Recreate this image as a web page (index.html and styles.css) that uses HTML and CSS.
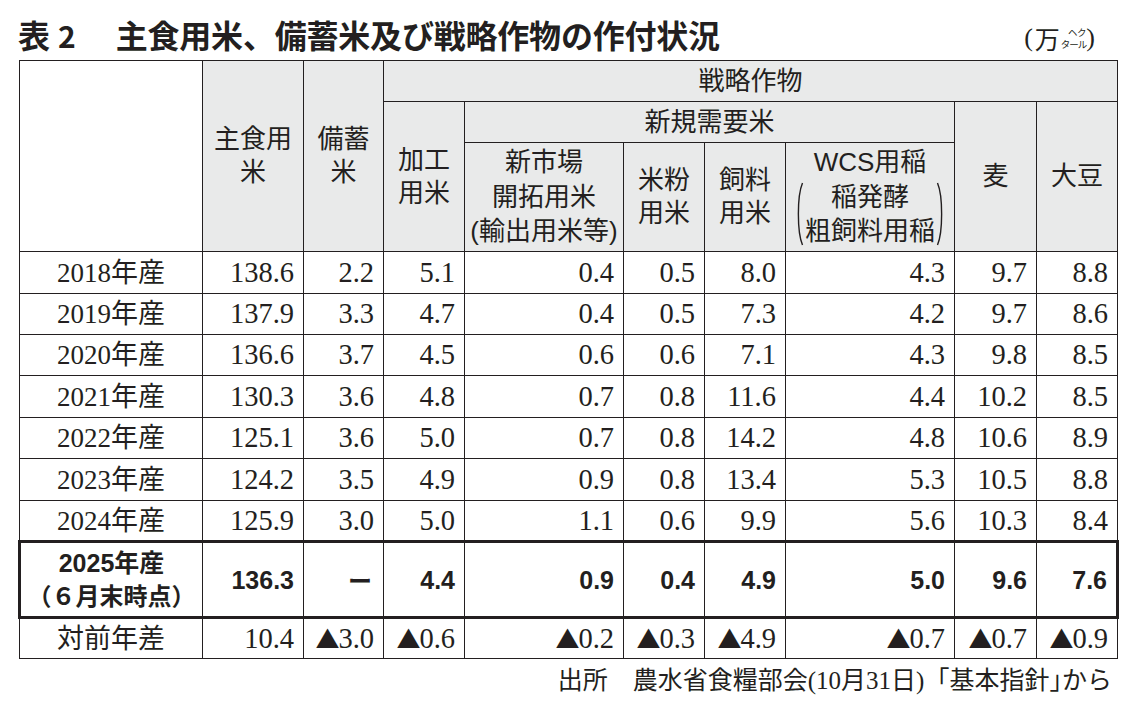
FILE: index.html
```html
<!DOCTYPE html>
<html lang="ja">
<head>
<meta charset="utf-8">
<title>表2</title>
<link rel="stylesheet" href="styles.css">
</head>
<body>
<div class="page">
  <div class="titlebar">
    <h1 class="title"><span class="t-hyo">表</span><span class="t-num">2</span><span class="t-text">主食用米、備蓄米及び戦略作物の作付状況</span></h1>
    <div class="unit"><span class="paren">(</span><span class="man">万</span><span class="hect"><span class="hk1">ヘク</span><span class="hk2">タール</span></span><span class="paren">)</span></div>
  </div>
  <table class="tbl">
    <colgroup>
      <col class="c-stub"><col class="c-shu"><col class="c-bi"><col class="c-ka"><col class="c-shin"><col class="c-ko"><col class="c-shi"><col class="c-wcs"><col class="c-mugi"><col class="c-daizu">
    </colgroup>
    <thead>
      <tr class="h1">
        <th rowspan="3" class="stub"></th>
        <th rowspan="3">主食用<br>米</th>
        <th rowspan="3">備蓄<br>米</th>
        <th colspan="7">戦略作物</th>
      </tr>
      <tr class="h2">
        <th rowspan="2">加工<br>用米</th>
        <th colspan="4">新規需要米</th>
        <th rowspan="2">麦</th>
        <th rowspan="2">大豆</th>
      </tr>
      <tr class="h3">
        <th class="lh">新市場<br>開拓用米<br><span class="np">(</span>輸出用米等<span class="np">)</span></th>
        <th>米粉<br>用米</th>
        <th>飼料<br>用米</th>
        <th class="wcs lh">
          <div>WCS用稲</div>
          <div class="wcs-sub">
            <svg class="bp" width="9" height="64" viewBox="0 0 9 64"><path d="M7.5 1 C2 14 2 50 7.5 63" fill="none" stroke="#231f20" stroke-width="1.4"/></svg>
            <div class="wcs-lines"><div>稲発酵</div><div>粗飼料用稲</div></div>
            <svg class="bp" width="9" height="64" viewBox="0 0 9 64"><path d="M1.5 1 C7 14 7 50 1.5 63" fill="none" stroke="#231f20" stroke-width="1.4"/></svg>
          </div>
        </th>
      </tr>
    </thead>
    <tbody>
      <tr class="r-a"><td class="yr">2018年産</td><td>138.6</td><td>2.2</td><td>5.1</td><td>0.4</td><td>0.5</td><td>8.0</td><td>4.3</td><td>9.7</td><td>8.8</td></tr>
      <tr class="r-b"><td class="yr">2019年産</td><td>137.9</td><td>3.3</td><td>4.7</td><td>0.4</td><td>0.5</td><td>7.3</td><td>4.2</td><td>9.7</td><td>8.6</td></tr>
      <tr class="r-b"><td class="yr">2020年産</td><td>136.6</td><td>3.7</td><td>4.5</td><td>0.6</td><td>0.6</td><td>7.1</td><td>4.3</td><td>9.8</td><td>8.5</td></tr>
      <tr class="r-a"><td class="yr">2021年産</td><td>130.3</td><td>3.6</td><td>4.8</td><td>0.7</td><td>0.8</td><td>11.6</td><td>4.4</td><td>10.2</td><td>8.5</td></tr>
      <tr class="r-b"><td class="yr">2022年産</td><td>125.1</td><td>3.6</td><td>5.0</td><td>0.7</td><td>0.8</td><td>14.2</td><td>4.8</td><td>10.6</td><td>8.9</td></tr>
      <tr class="r-a"><td class="yr">2023年産</td><td>124.2</td><td>3.5</td><td>4.9</td><td>0.9</td><td>0.8</td><td>13.4</td><td>5.3</td><td>10.5</td><td>8.8</td></tr>
      <tr class="r-b"><td class="yr">2024年産</td><td>125.9</td><td>3.0</td><td>5.0</td><td>1.1</td><td>0.6</td><td>9.9</td><td>5.6</td><td>10.3</td><td>8.4</td></tr>
      <tr class="hl"><td class="yr">2025年産<br><span class="hl-sub">（６月末時点）</span></td><td>136.3</td><td class="dash">ー</td><td>4.4</td><td>0.9</td><td>0.4</td><td>4.9</td><td>5.0</td><td>9.6</td><td>7.6</td></tr>
      <tr class="diff"><td class="yr">対前年差</td><td>10.4</td><td><span class="tri">▲</span>3.0</td><td><span class="tri">▲</span>0.6</td><td><span class="tri">▲</span>0.2</td><td><span class="tri">▲</span>0.3</td><td><span class="tri">▲</span>4.9</td><td><span class="tri">▲</span>0.7</td><td><span class="tri">▲</span>0.7</td><td><span class="tri">▲</span>0.9</td></tr>
    </tbody>
  </table>
  <p class="source">出所　農水省食糧部会<span class="np">(</span>10月31日<span class="np">)</span><span class="kb">「</span>基本指針<span class="kb kb-close">」</span>から</p>
</div>
</body>
</html>
```
FILE: styles.css
```css
* { box-sizing: border-box; }
html, body { margin: 0; padding: 0; background: #ffffff; }
body {
  color: #231f20;
  font-family: "Noto Sans CJK JP", sans-serif;
}
.page {
  width: 1134px;
  padding: 0 18px;
}
.titlebar {
  height: 60px;
  display: flex;
  justify-content: space-between;
  align-items: flex-end;
  padding-bottom: 7px;
}
.title {
  margin: 0;
  display: flex;
  align-items: baseline;
  font-size: 32px;
  line-height: 36px;
  font-weight: 700;
  color: #231f20;
}
.t-hyo { margin-right: 8px; }
.t-num { margin-right: 40px; font-size: 30px; }
.t-text { letter-spacing: -0.2px; }
.unit {
  display: flex;
  align-items: center;
  margin-right: 21px;
  margin-bottom: 1px;
  font-family: "Liberation Serif", "Noto Sans CJK JP", serif;
  font-size: 26px;
  line-height: 28px;
}
.unit .paren { font-size: 26px; }
.unit .man { font-family: "Noto Sans CJK JP", sans-serif; font-size: 25px; font-weight: 400; margin-left: 2px; }
.hect {
  display: flex;
  flex-direction: column;
  align-items: center;
  font-family: "Noto Sans CJK JP", sans-serif;
  font-size: 9.5px;
  line-height: 12px;
  margin: 0 0 0 1px;
}
.hk1 { padding-left: 7px; letter-spacing: -0.5px; }
.hk2 { letter-spacing: -1px; }

.tbl {
  border-collapse: collapse;
  table-layout: fixed;
  width: 1098px;
}
.c-stub { width: 183px; }
.c-shu { width: 101px; }
.c-bi { width: 80px; }
.c-ka { width: 81px; }
.c-shin { width: 159px; }
.c-ko { width: 81px; }
.c-shi { width: 81px; }
.c-wcs { width: 169px; }
.c-mugi { width: 82px; }
.c-daizu { width: 81px; }

.tbl th, .tbl td {
  border: 1px solid #231f20;
  padding: 0;
}
.tbl th {
  background: #e9eaea;
  font-family: "Liberation Sans", "Noto Sans CJK JP", sans-serif;
  font-weight: 400;
  font-size: 26px;
  line-height: 33px;
  text-align: center;
  vertical-align: middle;
  color: #231f20;
}
.tbl th.stub { background: #ffffff; }
.tbl th.lh { line-height: 34.5px; }
.tbl tr.h1 th, .tbl tr.h2 th { height: 41px; }
.tbl tr.h3 th { height: 109px; }
.np { font-family: "Liberation Sans", sans-serif; }

.wcs-sub {
  display: flex;
  justify-content: center;
  align-items: center;
  gap: 0;
}
.wcs-lines { padding: 0 1px; }
.bp { display: block; }

.tbl td {
  font-family: "Liberation Serif", "Noto Sans CJK JP", serif;
  font-size: 28.5px;
  line-height: 32px;
  text-align: right;
  vertical-align: middle;
  padding-right: 9px;
  color: #231f20;
}
.tbl tr.r-a td { height: 42px; }
.tbl tr.r-b td { height: 41px; }
.tbl td.yr {
  text-align: center;
  padding-right: 0;
  font-size: 27px;
}
.tbl tr.hl td {
  height: 76px;
  border-top: 3px solid #231f20;
  border-bottom: 3px solid #231f20;
  font-family: "Liberation Sans Narrow", "Liberation Sans", "Noto Sans CJK JP", sans-serif;
  font-weight: 700;
  font-size: 25px;
}
.tbl tr.hl td:first-child { border-left: 3px solid #231f20; line-height: 32px; font-size: 25px; }
.tbl tr.hl td:last-child { border-right: 3px solid #231f20; }
.hl-sub { font-family: "Noto Sans CJK JP", sans-serif; font-size: 24px; }
.tbl tr.hl td.dash { font-family: "Noto Sans CJK JP", sans-serif; font-size: 24px; padding-right: 11px; }
.tbl tr.diff td { height: 41px; }
.tri {
  font-family: "Noto Sans CJK JP", sans-serif;
  font-size: 24px;
  letter-spacing: -1px;
}

.source {
  margin: 5px 0 0 0;
  text-align: right;
  padding-right: 4px;
  font-family: "Liberation Serif", "Noto Sans CJK JP", serif;
  font-size: 25px;
  line-height: 28px;
  color: #231f20;
}
.source .np { font-family: "Liberation Serif", serif; }
.kb { font-family: "Noto Sans CJK JP", sans-serif; }
.kb-close { font-feature-settings: "halt"; }
```
